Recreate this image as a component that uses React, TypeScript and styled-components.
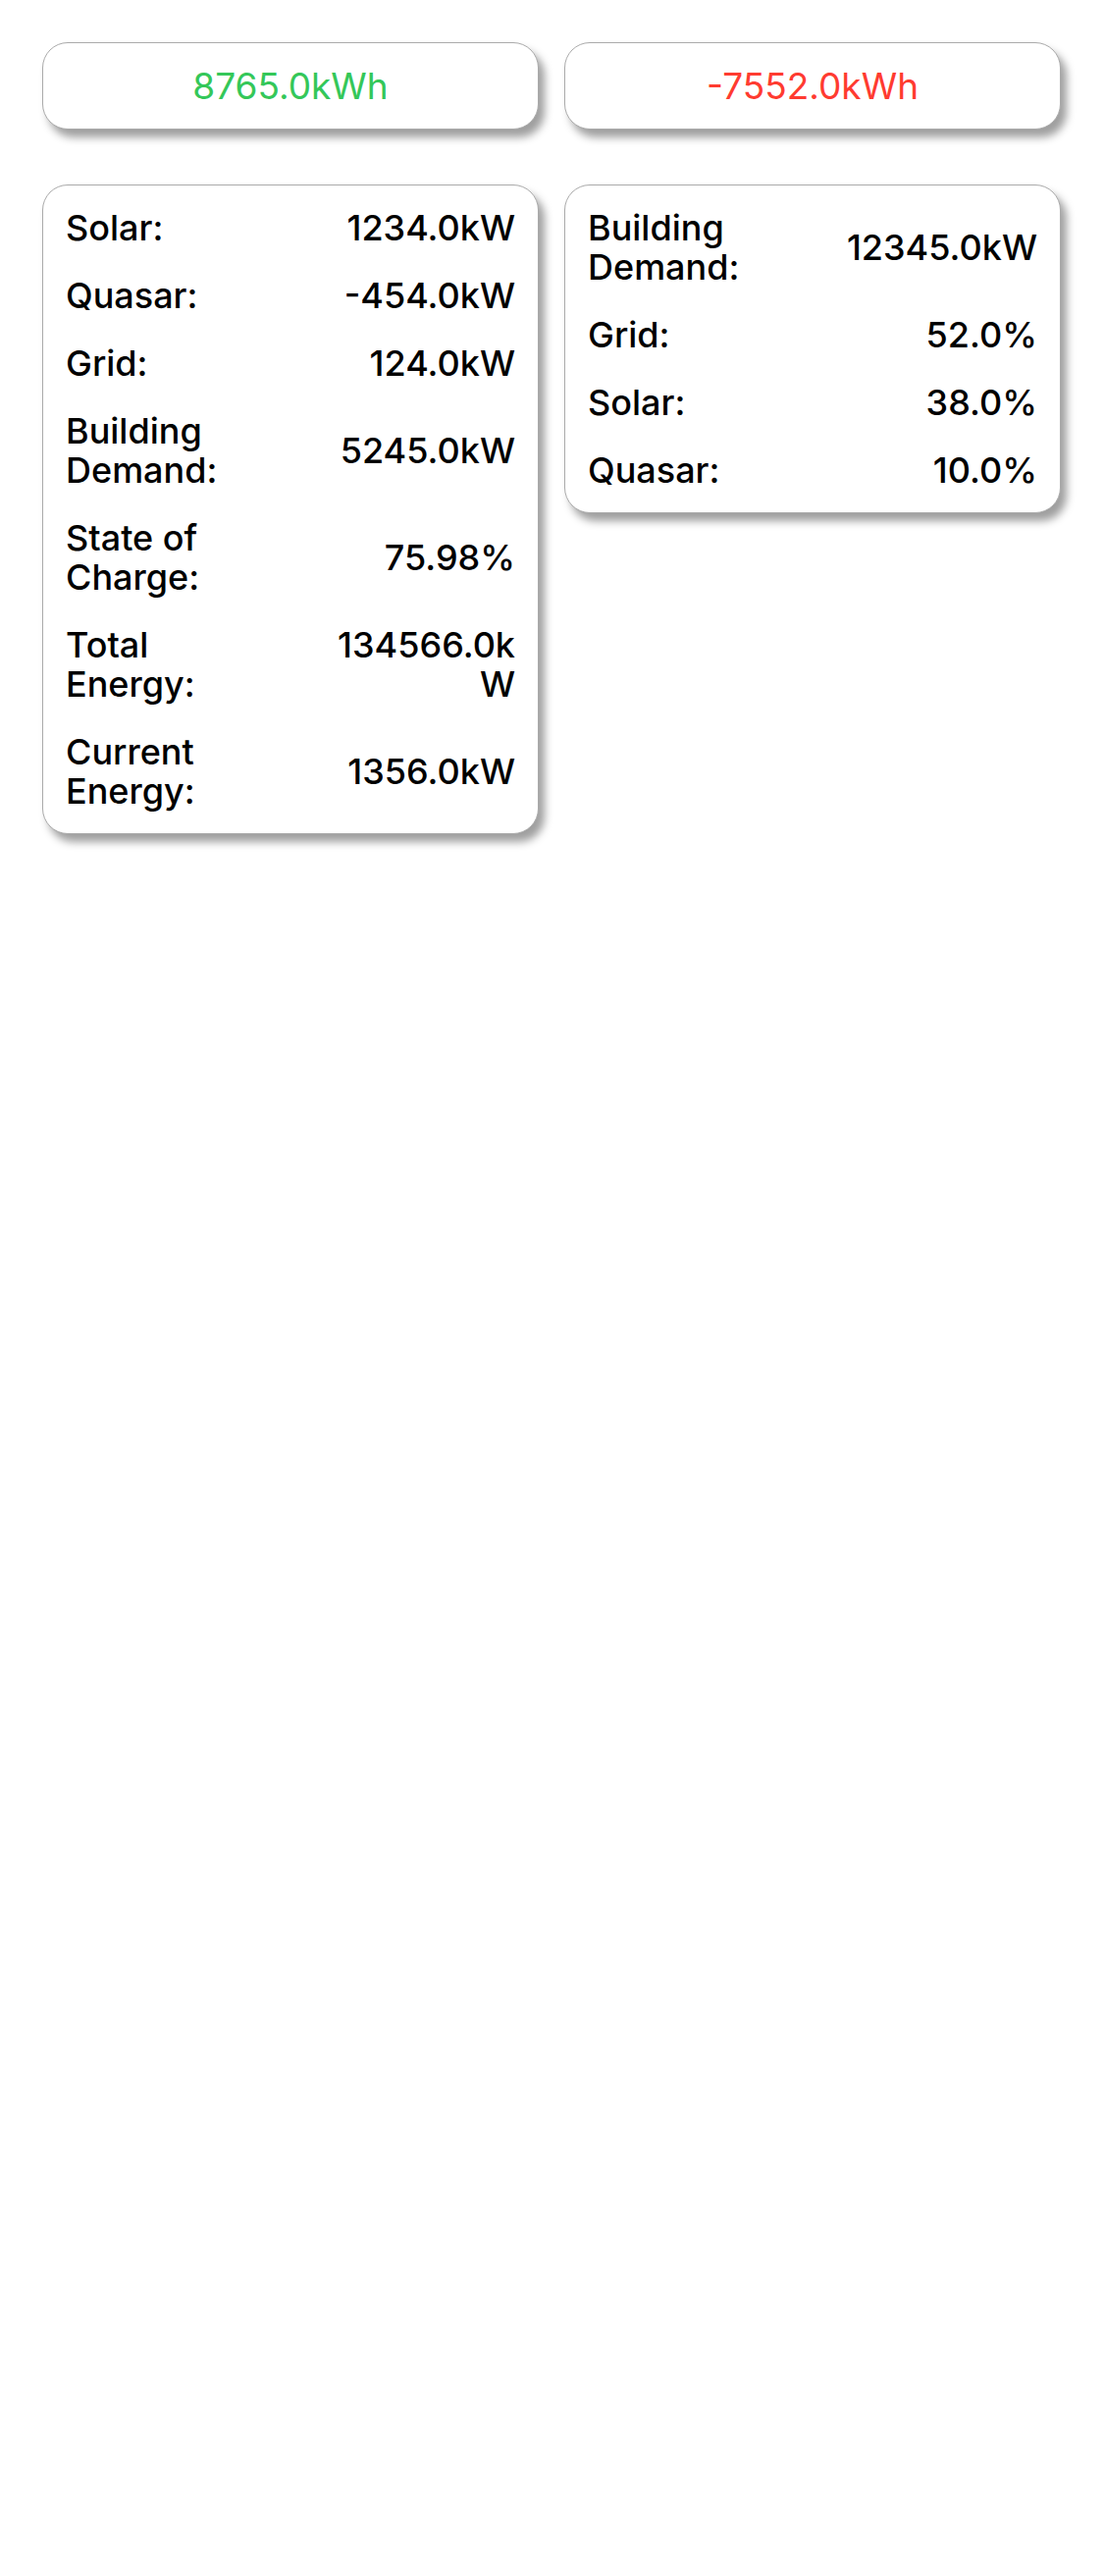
import React from "react";
import styled, {createGlobalStyle} from "styled-components";

const GlobalStyle = createGlobalStyle`
  html, body {
    margin: 0;
    padding: 0;
    background: #ffffff;
  }
  body {
    font-family: Inter, "Noto Sans", "Liberation Sans", sans-serif;
    color: #000000;
  }
`

const Page = styled.div`
  display: grid;
  grid-template-columns: 1fr 1fr;
  column-gap: 26px;
  row-gap: 56px;
  align-items: start;
  padding: 43px 44px 43px 43px;
`

const Card = styled.div`
  background: #ffffff;
  border: 1px solid #aaaaaa;
  border-radius: 26px;
  box-shadow: 6px 8px 8px rgba(0, 0, 0, 0.38);
`

const TotalCard = styled(Card)`
  height: 89px;
  box-sizing: border-box;
  display: flex;
  align-items: center;
  justify-content: center;
`

const TotalText = styled.span<{$tone: "gain" | "loss"}>`
  font-size: 37px;
  font-weight: 400;
  color: ${props => props.$tone === "gain" ? "#34c759" : "#ff3b30"};
`

const StatsCard = styled(Card)`
  display: flex;
  flex-direction: column;
  gap: 29px;
  padding: 23px 23px 23px 23px;
`

const StatRow = styled.div`
  display: grid;
  grid-template-columns: 1fr 1fr;
  column-gap: 40px;
  align-items: center;
  font-size: 36px;
  font-weight: 500;
  line-height: 40px;
`

const StatLabel = styled.span``

const StatValue = styled.span`
  text-align: right;
  overflow-wrap: anywhere;
`

type Stat = {label: string, value: string}

const energyStats: Stat[] = [
    {label: "Solar:", value: "1234.0kW"},
    {label: "Quasar:", value: "-454.0kW"},
    {label: "Grid:", value: "124.0kW"},
    {label: "Building Demand:", value: "5245.0kW"},
    {label: "State of Charge:", value: "75.98%"},
    {label: "Total Energy:", value: "134566.0kW"},
    {label: "Current Energy:", value: "1356.0kW"},
]

const demandStats: Stat[] = [
    {label: "Building Demand:", value: "12345.0kW"},
    {label: "Grid:", value: "52.0%"},
    {label: "Solar:", value: "38.0%"},
    {label: "Quasar:", value: "10.0%"},
]

function StatList({stats}: {stats: Stat[]}): React.JSX.Element {
    return (
        <StatsCard>
            {stats.map(stat => (
                <StatRow key={stat.label}>
                    <StatLabel>{stat.label}</StatLabel>
                    <StatValue>{stat.value}</StatValue>
                </StatRow>
            ))}
        </StatsCard>
    )
}

export default function App(): React.JSX.Element {
    return (
        <>
            <GlobalStyle/>
            <Page>
                <TotalCard><TotalText $tone="gain">8765.0kWh</TotalText></TotalCard>
                <TotalCard><TotalText $tone="loss">-7552.0kWh</TotalText></TotalCard>
                <StatList stats={energyStats}/>
                <StatList stats={demandStats}/>
            </Page>
        </>
    )
}
